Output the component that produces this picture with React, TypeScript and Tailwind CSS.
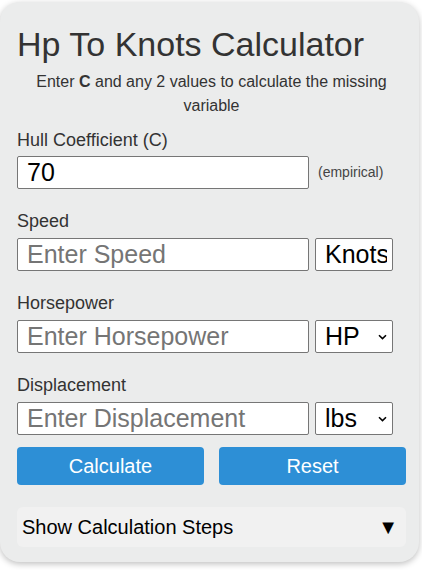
import { useState } from "react";

const font = { fontFamily: '"Liberation Sans", Arial, sans-serif' };

function Chevron() {
  return (
    <svg width="9" height="6" viewBox="0 0 9 6" className="shrink-0">
      <path d="M1 1.2 L4.5 4.6 L8 1.2" fill="none" stroke="#000" strokeWidth="1.6" />
    </svg>
  );
}

function UnitSelect({ value, arrow = true }: { value: string; arrow?: boolean }) {
  return (
    <div className="ml-[6px] flex h-[33px] w-[78px] items-center rounded-[2px] border border-[#767676] bg-white pl-[9px] pr-[5px] text-[25px] text-black">
      {arrow ? (
        <span className="flex-1 whitespace-nowrap leading-[29px]">{value}</span>
      ) : (
        <span className="min-w-0 flex-1 overflow-hidden whitespace-nowrap leading-[29px]">{value}</span>
      )}
      {arrow && <Chevron />}
    </div>
  );
}

function Field({
  label,
  placeholder,
  unit,
  arrow,
}: {
  label: string;
  placeholder: string;
  unit: string;
  arrow?: boolean;
}) {
  const [val, setVal] = useState("");
  return (
    <div className="mt-[21px]">
      <label className="block text-[18px] leading-[22px] text-[#333]">{label}</label>
      <div className="mt-[6px] flex items-center">
        <input
          value={val}
          onChange={(e) => setVal(e.target.value)}
          placeholder={placeholder}
          className="h-[33px] w-[292px] rounded-[2px] border border-[#767676] bg-white pl-[9px] text-[25px] text-black placeholder-[#757575] outline-none"
        />
        <UnitSelect value={unit} arrow={arrow} />
      </div>
    </div>
  );
}

export default function App() {
  const [c, setC] = useState("70");

  return (
    <div className="min-h-screen bg-white pt-[2px]" style={font}>
      <div className="w-[419px] rounded-[20px] bg-[#ebecec] pl-[17px] pr-[13px] pt-[22px] pb-[15px] shadow-[0_2px_6px_rgba(0,0,0,0.25)]">
        <h1 className="text-[34px] leading-[40px] font-normal text-[#333]">Hp To Knots Calculator</h1>
        <p className="mt-[6px] text-center text-[16px] leading-[24px] text-[#333]">
          Enter <b>C</b> and any 2 values to calculate the missing variable
        </p>

        <div className="mt-[11px]">
          <label className="block text-[18px] leading-[22px] text-[#333]">Hull Coefficient (C)</label>
          <div className="mt-[5px] flex items-center">
            <input
              value={c}
              onChange={(e) => setC(e.target.value)}
              className="h-[33px] w-[292px] rounded-[2px] border border-[#767676] bg-white pl-[9px] text-[25px] text-black outline-none"
            />
            <span className="ml-[9px] text-[14px] text-[#444]">(empirical)</span>
          </div>
        </div>

        <Field label="Speed" placeholder="Enter Speed" unit="Knots" arrow={false} />
        <Field label="Horsepower" placeholder="Enter Horsepower" unit="HP" />
        <Field label="Displacement" placeholder="Enter Displacement" unit="lbs" />

        <div className="mt-[12px] grid grid-cols-2 gap-[15px]">
          <button className="h-[38px] rounded-[4px] bg-[#2d8fd6] text-[20px] text-white">Calculate</button>
          <button className="h-[38px] rounded-[4px] bg-[#2d8fd6] text-[20px] text-white">Reset</button>
        </div>

        <div className="mt-[22px] flex h-[40px] items-center justify-between rounded-[6px] bg-[#f1f1f1] pl-[5px] pr-[8px] text-[20px] text-black">
          <span>Show Calculation Steps</span>
          <span>▼</span>
        </div>
      </div>
    </div>
  );
}
